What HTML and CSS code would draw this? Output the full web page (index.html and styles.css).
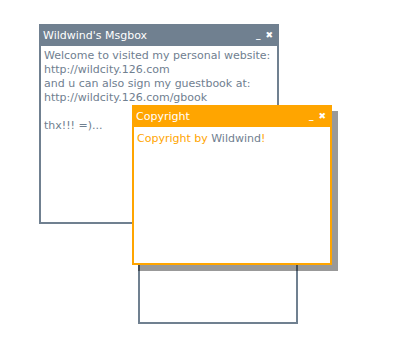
FILE: index.html
```html
<!DOCTYPE html>
<html>
<head>
  <title>Msgbox</title>
  <link rel="stylesheet" href="styles.css">
</head>
<body>

<div class="win win-grey">
  <div class="titlebar">
    <span class="title">Wildwind's Msgbox</span>
    <span class="btns"><span class="min">_</span><span class="close">&#10006;</span></span>
  </div>
  <div class="content">
    Welcome to visited my personal website:<br>
    http://wildcity.126.com<br>
    and u can also sign my guestbook at:<br>
    http://wildcity.126.com/gbook<br>
    <br>
    thx!!! =)...
  </div>
</div>

<div class="drag-outline"></div>

<div class="win win-orange">
  <div class="titlebar">
    <span class="title">Copyright</span>
    <span class="btns"><span class="min">_</span><span class="close">&#10006;</span></span>
  </div>
  <div class="content">
    Copyright by <span class="author">Wildwind</span>!
  </div>
</div>

</body>
</html>
```

FILE: styles.css
```css
body {
  margin: 0;
  background: #fff;
  font-family: "DejaVu Sans", Verdana, sans-serif;
  font-size: 11px;
}

.win {
  position: absolute;
  box-sizing: border-box;
  background: #fff;
  border: 2px solid;
}

.titlebar {
  display: flex;
  justify-content: space-between;
  align-items: center;
  height: 18px;
  padding: 0 4px 2px 2px;
  color: #fff;
}

.btns {
  display: flex;
  gap: 5px;
  font-size: 9px;
  font-weight: bold;
}

.content {
  padding: 3px 3px;
  line-height: 14px;
}

.win-grey {
  left: 39px;
  top: 24px;
  width: 240px;
  height: 200px;
  border-color: #708090;
  color: #708090;
}

.win-grey .titlebar {
  background: #708090;
}

.win-orange {
  left: 132px;
  top: 105px;
  width: 200px;
  height: 160px;
  border-color: #ffa500;
  color: #ffa500;
  box-shadow: 6px 6px 0 rgba(0, 0, 0, 0.4);
}

.win-orange .titlebar {
  background: #ffa500;
}

.win-orange .content {
  padding-top: 5px;
}

.author {
  color: #708090;
}

.drag-outline {
  position: absolute;
  left: 138px;
  top: 164px;
  width: 156px;
  height: 156px;
  border: 2px solid #708090;
}
```
